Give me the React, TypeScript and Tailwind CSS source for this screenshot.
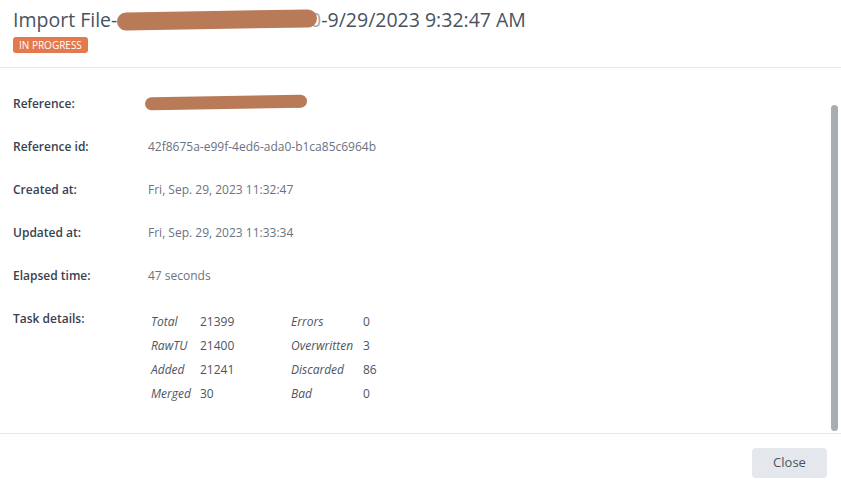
import React from "react";

const rows = [
  { label: "Reference id:", value: "42f8675a-e99f-4ed6-ada0-b1ca85c6964b" },
  { label: "Created at:", value: "Fri, Sep. 29, 2023 11:32:47" },
  { label: "Updated at:", value: "Fri, Sep. 29, 2023 11:33:34" },
  { label: "Elapsed time:", value: "47 seconds" },
];

const details = [
  ["Total", "21399", "Errors", "0"],
  ["RawTU", "21400", "Overwritten", "3"],
  ["Added", "21241", "Discarded", "86"],
  ["Merged", "30", "Bad", "0"],
];

const App = () => {
  return (
    <div
      className="w-[841px] h-[493px] bg-white flex flex-col overflow-hidden"
      style={{ fontFamily: '"Open Sans", sans-serif' }}
    >
      {/* Header */}
      <div className="h-[68px] border-b border-[#e6e7e9] px-[13px] pt-[6px] flex flex-col items-start">
        <h1 className="text-[19.5px] leading-[28px] text-[#4a5261] flex items-center whitespace-nowrap">
          <span>Import File-</span>
          <span className="relative inline-block w-[204px] h-[28px]">
            <span className="absolute right-[0px] top-[0px] text-[#4a5261] opacity-50">20</span>
            <span className="absolute left-[0px] top-[5px] w-[200px] h-[18px] rounded-full bg-[#b97b57] rotate-[-1deg]" />
          </span>
          <span>-9/29/2023 9:32:47 AM</span>
        </h1>
        <span className="mt-[3px] px-[6px] h-[16px] flex items-center rounded-[3px] bg-[#e27a4d] text-white text-[10px] uppercase">
          In progress
        </span>
      </div>

      {/* Body */}
      <div className="flex-1 flex">
        <div className="flex-1 pt-[14px] px-[13px] text-[12px]">
          <div className="flex items-center h-[43px]">
            <div className="w-[135px] font-semibold text-[#394150]">Reference:</div>
            <div className="relative w-[165px] h-[20px]">
              <span className="absolute left-[148px] top-[1px] text-[#9aa0a8] text-[10px]">_T</span>
              <span className="absolute left-[-3px] top-[2px] w-[162px] h-[13px] rounded-full bg-[#b97b57] rotate-[-1deg]" />
            </div>
          </div>
          {rows.map((r) => (
            <div key={r.label} className="flex items-center h-[43px]">
              <div className="w-[135px] font-semibold text-[#394150]">{r.label}</div>
              <div className="text-[#6b7280]">{r.value}</div>
            </div>
          ))}
          <div className="flex items-start pt-[13px]">
            <div className="w-[135px] font-semibold text-[#394150] leading-[18px]">Task details:</div>
            <div className="ml-[3px] grid grid-cols-[49px_91px_72px_auto] text-[#4b5563]">
              {details.map((d) => (
                <React.Fragment key={d[0]}>
                  <div className="italic h-[24px] flex items-center">{d[0]}</div>
                  <div className="h-[24px] flex items-center">{d[1]}</div>
                  <div className="italic h-[24px] flex items-center">{d[2]}</div>
                  <div className="h-[24px] flex items-center">{d[3]}</div>
                </React.Fragment>
              ))}
            </div>
          </div>
        </div>
        {/* Scrollbar */}
        <div className="w-[12px] pt-[37px] pb-[2px] pr-[3px] flex justify-end">
          <div className="w-[7px] h-[326px] rounded-full bg-[#a9acb0]" />
        </div>
      </div>

      {/* Footer */}
      <div className="h-[60px] border-t border-[#e6e7e9] flex items-center justify-end pr-[14px] pb-[2px]">
        <button className="w-[75px] h-[30px] rounded-[4px] bg-[#e4e7eb] text-[13px] text-[#4a5261]">
          Close
        </button>
      </div>
    </div>
  );
};

export default App;
